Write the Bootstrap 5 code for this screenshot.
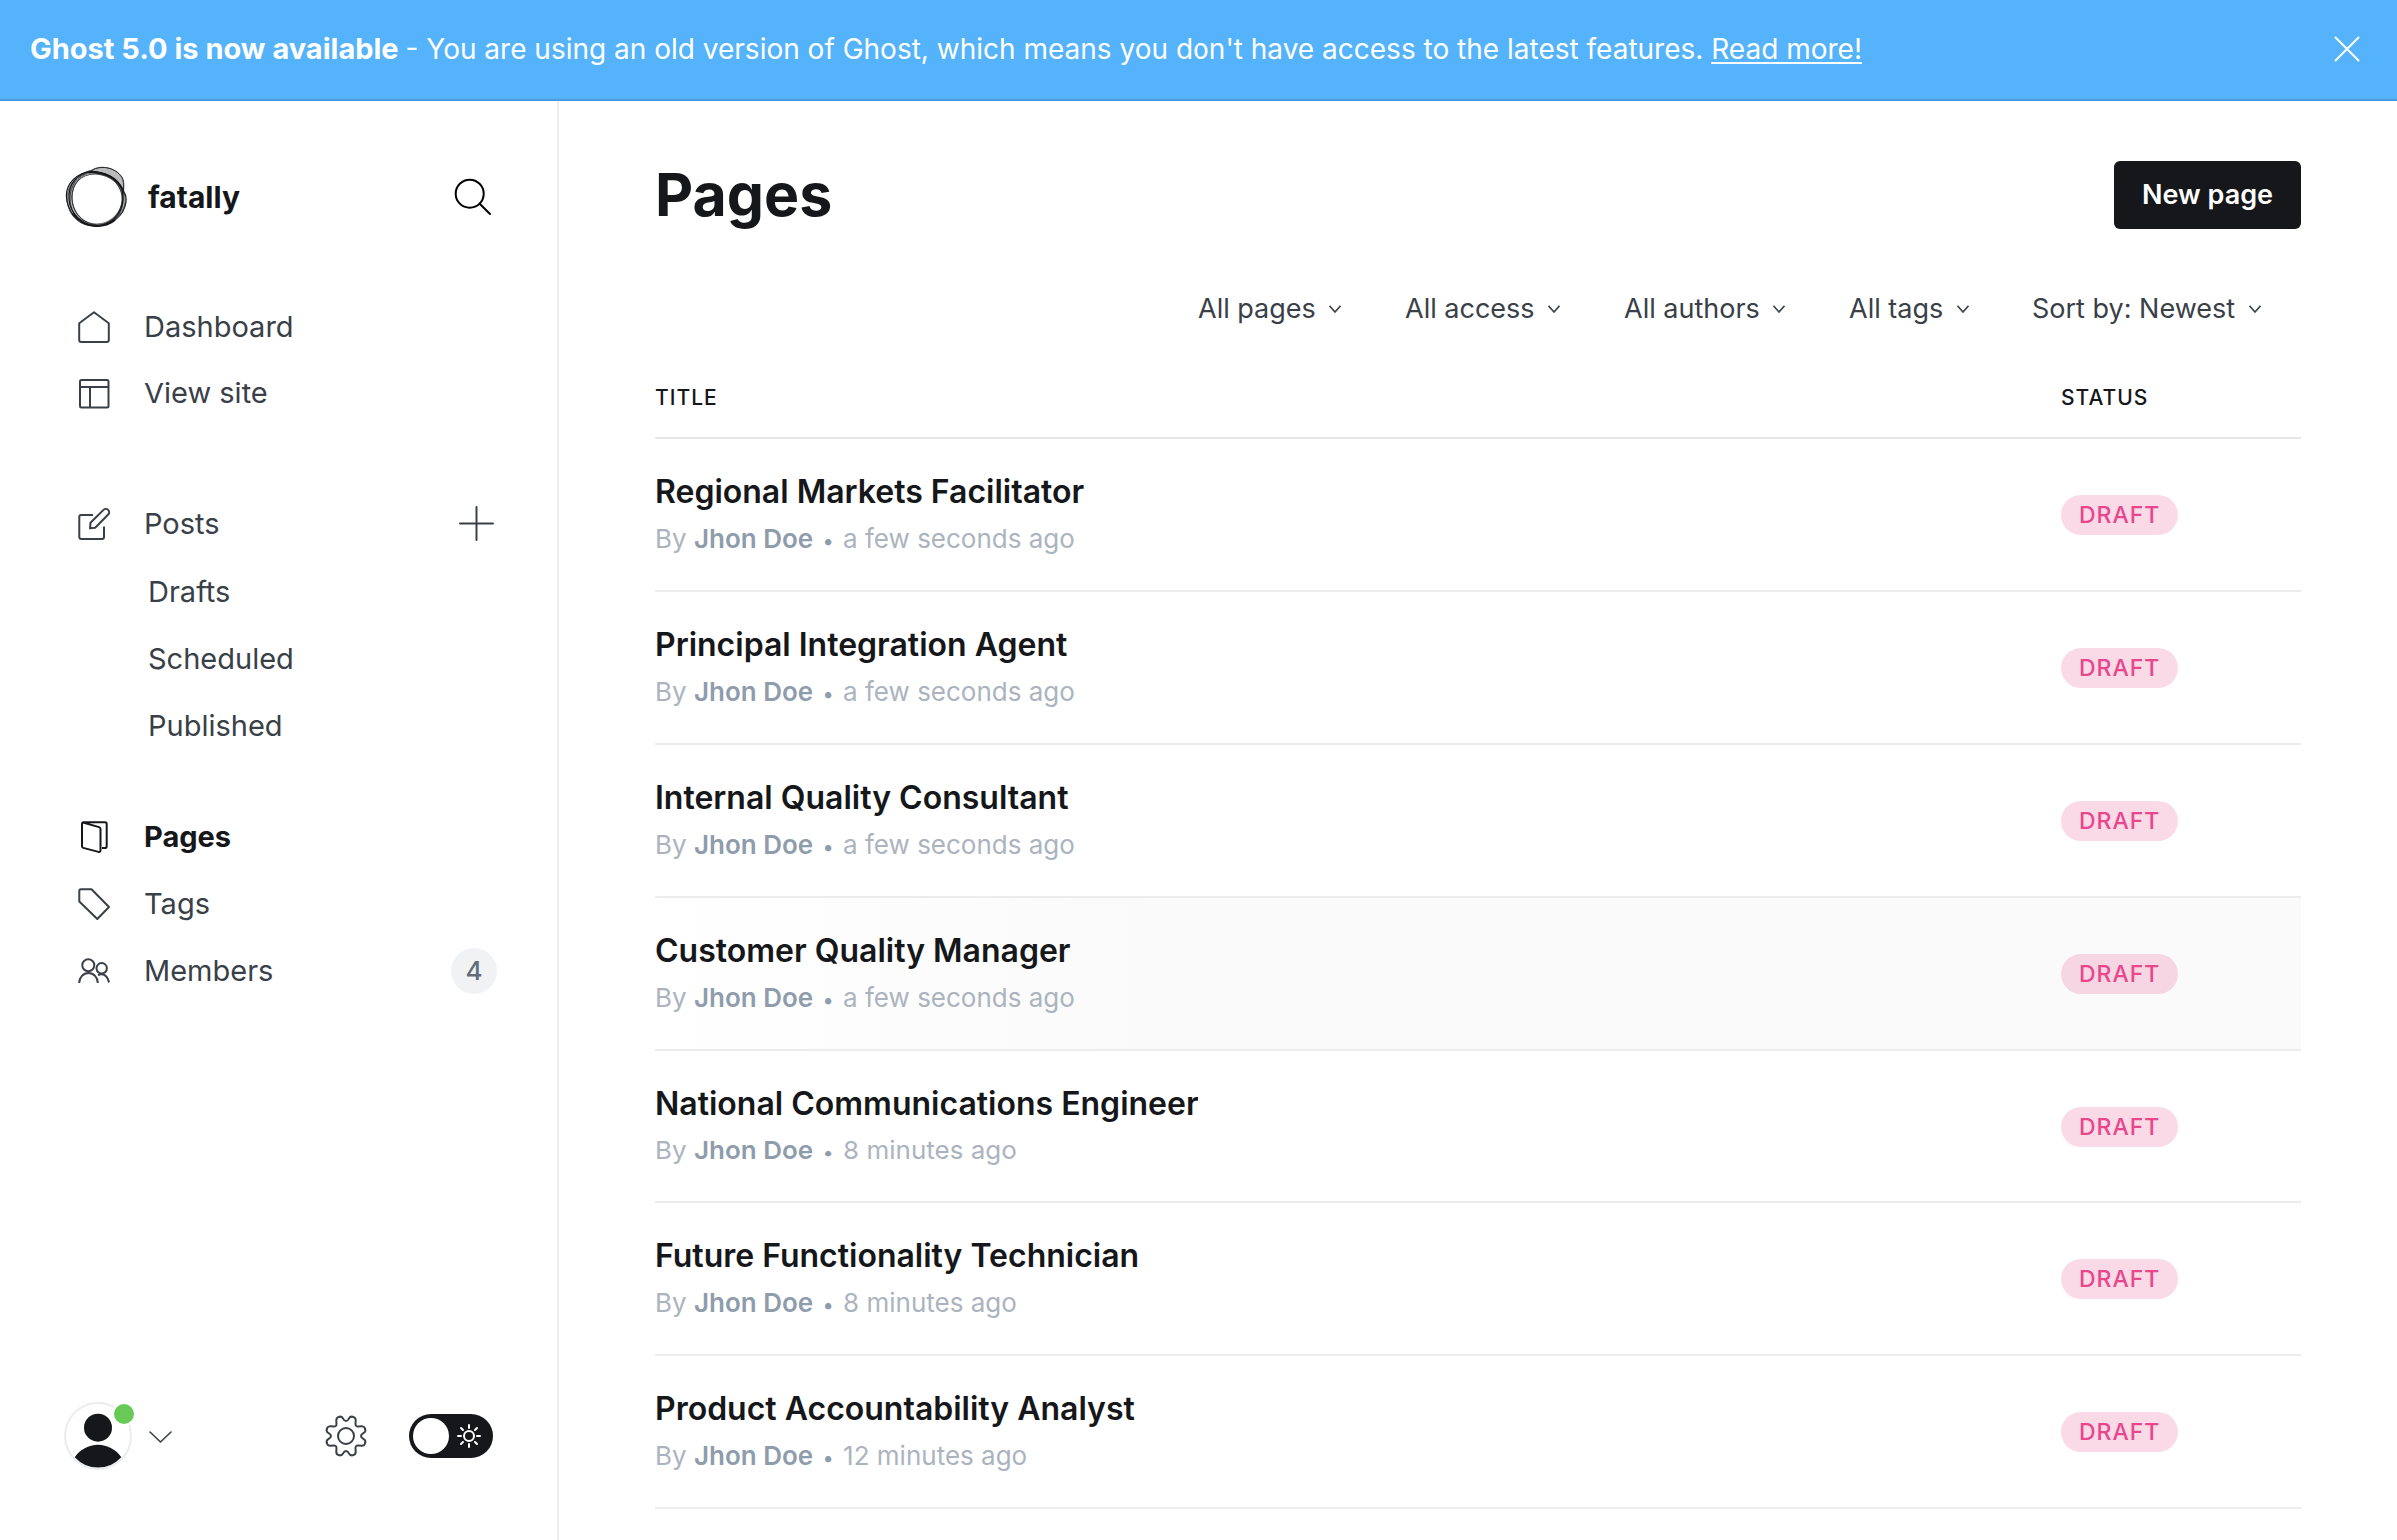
<!DOCTYPE html>
<html lang="en">
<head>
<meta charset="utf-8">
<meta name="viewport" content="width=device-width, initial-scale=1">
<title>Pages - fatally</title>
<link href="https://cdn.jsdelivr.net/npm/bootstrap@5.3.0/dist/css/bootstrap.min.css" rel="stylesheet">
<style>
  :root { --ink: #15171a; --slate: #394047; --muted: #abb4be; --author: #8e9cac; --line: #ebeced; }
  body { font-family: Inter, "Open Sans", sans-serif; font-size: 29px; line-height: 40px; color: var(--slate); }
  a { color: inherit; text-decoration: none; }
  svg { display: block; flex: none; fill: none; stroke: currentColor; stroke-width: 2; overflow: visible; }
  svg.solid { stroke: none; }
  svg.site-logo { stroke: var(--ink); }
  .icon-btn { background: none; border: 0; padding: 0; color: inherit; }

  .upgrade-bar { background: #54b3fa; border-bottom: 2px solid #459ce0; color: #fff; font-size: 28px; padding: 29px 38px 30px 30px; }
  .upgrade-bar strong { font-size: 29px; }
  .upgrade-bar a { text-decoration: underline; text-decoration-thickness: 2px; text-underline-offset: 3px; }

  .side-col { width: 560px; flex: none; border-right: 2px solid var(--line); padding: 64px 62px 70px 64px; min-height: calc(100vh - 101px); }
  .site-head { height: 64px; padding: 0 4px 0 1px; margin-bottom: 64px; gap: 21px; }
  .site-title { font-size: 30px; font-weight: 700; color: var(--ink); }
  .nav-item-row { height: 67px; padding: 0 0 0 14px; }
  .nav-item-row a { gap: 34px; }
  .nav-item-row.current { color: var(--ink); font-weight: 700; }
  .group-gap { margin-top: 64px; }
  .group-gap-sm { margin-top: 44px; }
  .sub-list { margin-top: 1px; padding-left: 84px; }
  .sub-list li { height: 67px; }
  .count-pill { width: 46px; height: 46px; margin-right: -2px; background: #f1f2f4; color: #626d79; font-size: 26px; font-weight: 500; }
  .plus-btn { margin-right: 1px; }
  .side-foot { padding-right: 2px; }
  .side-foot .cog-link { margin-right: 44px; }
  .avatar-dot { position: absolute; top: 0; right: -4px; width: 24px; height: 24px; border: 2px solid #fff; border-radius: 50%; background: #67ca56; }
  .night-switch { appearance: none; width: 84px; height: 44px; margin: 0; border-radius: 22px; background: var(--ink) url("data:image/svg+xml,%3Csvg xmlns='http://www.w3.org/2000/svg' viewBox='0 0 84 44'%3E%3Ccircle cx='22' cy='22' r='18' fill='%23fff'/%3E%3Cg transform='translate(60 22)' fill='none' stroke='%23fff' stroke-width='2' stroke-linecap='round'%3E%3Ccircle r='5'/%3E%3Cpath d='M0-11v3M0 8v3M-11 0h3M8 0h3M-8-8l2 2M6 6l2 2M-8 8l2-2M6-6l2-2'/%3E%3C/g%3E%3C/svg%3E") center / 100% 100% no-repeat; }

  .main-col { padding: 60px 96px 0; min-width: 0; }
  .screen-title { font-size: 59px; line-height: 68px; font-weight: 700; color: var(--ink); }
  .new-btn { background: var(--ink); color: #fff; font-size: 27px; line-height: 40px; font-weight: 600; padding: 14px 28px; border: 0; border-radius: 6px; }
  .filters { margin-top: 60px; padding-right: 40px; gap: 64px; }
  .filter-select { appearance: none; border: 0; color: var(--slate); font-size: 27px; line-height: 40px; height: 40px; padding: 0 25px 0 0;
    background: transparent url("data:image/svg+xml,%3Csvg xmlns='http://www.w3.org/2000/svg' viewBox='0 0 12 8'%3E%3Cpath d='M.5 .8 6 7 11.5 .8' fill='none' stroke='%23394047' stroke-width='1.6'/%3E%3C/svg%3E") right center / 12px 8px no-repeat; }
  .page-list { width: 100%; border-collapse: collapse; }
  .page-list th { padding: 58px 0 27px; font-size: 21px; line-height: 24px; font-weight: 500; letter-spacing: 1px; color: var(--ink); border-bottom: 2px solid #e5e7e9; text-transform: uppercase; }
  .page-list td { padding: 30px 0 28px; border-bottom: 2px solid var(--line); vertical-align: middle; }
  .page-list .status-cell { width: 240px; }
  .page-list tr.hovered { background: linear-gradient(to right, #fff, #fafafa 30%); }
  .entry-title { display: block; font-size: 32px; line-height: 46px; font-weight: 600; color: var(--ink); }
  .entry-meta { font-size: 26px; line-height: 46px; color: var(--muted); margin: 1px 0 0; }
  .entry-meta span { color: var(--author); font-weight: 600; }
  .entry-meta i { font-style: normal; font-size: 20px; line-height: 1; margin: 0 2px; color: var(--author); }
  .draft-pill { display: block; width: max-content; height: 40px; line-height: 40px; margin-bottom: 2px; padding: 0 18px; border-radius: 20px; font-size: 23px; font-weight: 500; letter-spacing: 1px; color: #e9468c; background: rgba(233, 69, 140, .2); }
</style>
</head>
<body>
<div class="upgrade-bar d-flex align-items-center justify-content-between">
  <div><strong>Ghost 5.0 is now available</strong> - You are using an old version of Ghost, which means you don't have access to the latest features. <a href="#">Read more!</a></div>
  <button class="icon-btn" type="button" aria-label="Close"><svg width="24" height="24" viewBox="0 0 24 24" stroke-linecap="round"><path d="M.5.5l23 23M23.5.5l-23 23"/></svg></button>
</div>

<div class="d-flex">
  <aside class="side-col d-flex flex-column">
    <div class="site-head d-flex align-items-center">
      <svg class="site-logo" width="62" height="62" viewBox="0 0 62 62">
        <path fill="#777" fill-opacity=".5" fill-rule="evenodd" stroke-width=".6" d="M27 4C34-1 49 1 55 9c5 6 3 12 4 18 3 8 0 18-6 23-5 6-12 10-22 10C17 61 6 52 3 40-1 28 5 10 27 4zM27 7C14 8 7 20 7 31c0 15 11 27 25 27 12 0 21-9 24-18 3-8 1-14-2-19-5-10-14-13-27-14z"/>
        <g stroke-width="1.200">
          <path d="M22 6C7 10-1 22 2 35c3 15 14 25 29 25 15-1 26-11 27-27C59 16 46 5 22 6z"/>
          <path d="M26 5C12 8 3 18 4 33c1 14 12 26 27 27 14 0 28-9 30-24 1-8-2-9-4-13C53 13 41 6 26 5z"/>
          <path stroke-width=".8" d="M25 6C34-2 50 1 57 11c4 7 0 16 1 21 1 14-9 27-26 28C17 60 5 48 5 33 5 20 12 9 25 6z"/>
          <path stroke-width=".8" d="M30 8C16 8 7 18 7 31c0 16 11 27 25 28 12 0 24-10 25-24C58 20 47 9 30 8z"/>
        </g>
        <path stroke-width="2" d="M8 47c6 8 14 13 24 13 8 0 13-2 18-6M24 6c14 0 27 5 34 18"/>
      </svg>
      <span class="site-title me-auto">fatally</span>
      <button class="icon-btn text-black" type="button" aria-label="Search"><svg width="36" height="36" viewBox="0 0 36 36" stroke-linecap="round"><circle cx="14.7" cy="14.7" r="14"/><path d="M24.7 24.7l10.3 10.3"/></svg></button>
    </div>

    <nav aria-label="Main">
      <ul class="list-unstyled m-0">
        <li class="nav-item-row d-flex"><a class="d-flex align-items-center" href="#"><svg width="32" height="32" viewBox="0 0 32 32" stroke-linejoin="round"><path d="M1.2 12.2V29q0 2 2 2h25.600q2 0 2-2V12.200L16 1.300z"/></svg>Dashboard</a></li>
        <li class="nav-item-row d-flex"><a class="d-flex align-items-center" href="#"><svg width="32" height="32" viewBox="0 0 32 32"><rect x="2" y="2" width="28.500" height="28.500" rx="1.500"/><path d="M2 10h28.500M12 10v20.500"/></svg>View site</a></li>
        <li class="nav-item-row d-flex justify-content-between group-gap"><a class="d-flex align-items-center" href="#"><svg width="32" height="32" viewBox="0 0 32 32" stroke-linejoin="round"><path d="M15 7H3Q1.300 7 1.300 9v20q0 2 2 2H24q2 0 2-2V18.500M12 20.300l.5-5.500L25.500 1.900a3.200 3.200 0 0 1 4.700 4.600L17.200 19.700z"/></svg>Posts</a>
          <button class="icon-btn plus-btn" type="button" aria-label="New post"><svg width="35" height="35" viewBox="0 0 35 35" stroke-linecap="round"><path d="M17.500 1v33M1 17.500h33"/></svg></button></li>
      </ul>
      <ul class="list-unstyled sub-list mb-0">
        <li class="d-flex align-items-center"><a href="#">Drafts</a></li>
        <li class="d-flex align-items-center"><a href="#">Scheduled</a></li>
        <li class="d-flex align-items-center"><a href="#">Published</a></li>
      </ul>
      <ul class="list-unstyled mb-0 group-gap-sm">
        <li class="nav-item-row d-flex current"><a class="d-flex align-items-center" href="#" aria-current="page"><svg width="32" height="32" viewBox="0 0 32 32" stroke-linejoin="round"><path d="M24 27h3q1.700 0 1.700-1.800V3Q28.700 1.200 27 1.200H5.500Q4 1.200 4 3v22.300q0 1.200 1.200 1.600l15.300 4q2 .4 2-1.600V8q0-1.500-1.400-1.900L5 1.500"/></svg>Pages</a></li>
        <li class="nav-item-row d-flex"><a class="d-flex align-items-center" href="#"><svg width="32" height="32" viewBox="0 0 32 32" stroke-linejoin="round"><path d="M3 1.300h10.500L31 19 19.300 31 1.300 13.500V3q0-1.700 1.700-1.700z"/></svg>Tags</a></li>
        <li class="nav-item-row d-flex align-items-center justify-content-between"><a class="d-flex align-items-center" href="#"><svg width="32" height="32" viewBox="0 0 32 32"><circle cx="10.300" cy="10.300" r="6"/><circle cx="23.700" cy="13.300" r="5.200"/><path d="M1.200 28a9.300 10 0 0 1 18.600 0M20 20q8.500-3 11 7.500"/></svg>Members</a>
          <span class="count-pill rounded-circle d-flex align-items-center justify-content-center">4</span></li>
      </ul>
    </nav>

    <div class="side-foot d-flex align-items-center mt-auto">
      <button class="icon-btn d-flex align-items-center" type="button" aria-label="Account menu">
        <span class="position-relative d-block">
          <svg class="solid" width="68" height="68" viewBox="0 0 68 68"><circle cx="34" cy="34" r="33" stroke="#ebeced" stroke-width="2"/><circle cx="34" cy="25.700" r="14" fill="#15171a"/><path fill="#15171a" d="M10.700 55.300a28 28 0 0 1 46.600 0a31.600 31.600 0 0 1-46.600 0z"/></svg>
          <span class="avatar-dot"></span>
        </span>
        <svg class="ms-3" width="24" height="13" viewBox="0 0 24 13" stroke-linecap="round"><path d="M2 2l10.500 10L23 2" stroke-width="1.600"/></svg>
      </button>
      <a class="cog-link ms-auto" href="#" aria-label="Settings"><svg width="40" height="40" viewBox="-20 -20 40 40"><defs><path id="cog" d="M0-15C1.800-15 2.300-16.200 3-17.600 4-19.400 6.200-19.600 7.800-18.900 9.400-18.200 9.800-17 9.700-15.500L9.500-12.300C9.400-10.300 10.300-9.400 12.300-9.500L15.500-9.700C17-9.800 18.200-9.400 18.900-7.800 19.600-6.200 19.400-4 17.600-3 16.200-2.300 15-1.800 15 0"/></defs><use href="#cog"/><use href="#cog" transform="rotate(90)"/><use href="#cog" transform="rotate(180)"/><use href="#cog" transform="rotate(270)"/><circle r="8"/></svg></a>
      <input class="night-switch" type="checkbox" role="switch" aria-label="Night mode">
    </div>
  </aside>

  <main class="main-col flex-grow-1">
    <div class="d-flex align-items-center justify-content-between">
      <h1 class="screen-title m-0">Pages</h1>
      <button class="new-btn" type="button">New page</button>
    </div>
    <div class="filters d-flex justify-content-end">
      <select class="filter-select" aria-label="Type"><option>All pages</option></select>
      <select class="filter-select" aria-label="Access"><option>All access</option></select>
      <select class="filter-select" aria-label="Author"><option>All authors</option></select>
      <select class="filter-select" aria-label="Tag"><option>All tags</option></select>
      <select class="filter-select" aria-label="Sort"><option>Sort by: Newest</option></select>
    </div>
    <table class="page-list">
      <thead><tr><th scope="col">Title</th><th scope="col" class="status-cell">Status</th></tr></thead>
      <tbody>
        <tr><td><a class="entry-title" href="#">Regional Markets Facilitator</a><p class="entry-meta">By <span>Jhon Doe</span> <i>•</i> a few seconds ago</p></td><td><span class="draft-pill">DRAFT</span></td></tr>
        <tr><td><a class="entry-title" href="#">Principal Integration Agent</a><p class="entry-meta">By <span>Jhon Doe</span> <i>•</i> a few seconds ago</p></td><td><span class="draft-pill">DRAFT</span></td></tr>
        <tr><td><a class="entry-title" href="#">Internal Quality Consultant</a><p class="entry-meta">By <span>Jhon Doe</span> <i>•</i> a few seconds ago</p></td><td><span class="draft-pill">DRAFT</span></td></tr>
        <tr class="hovered"><td><a class="entry-title" href="#">Customer Quality Manager</a><p class="entry-meta">By <span>Jhon Doe</span> <i>•</i> a few seconds ago</p></td><td><span class="draft-pill">DRAFT</span></td></tr>
        <tr><td><a class="entry-title" href="#">National Communications Engineer</a><p class="entry-meta">By <span>Jhon Doe</span> <i>•</i> 8 minutes ago</p></td><td><span class="draft-pill">DRAFT</span></td></tr>
        <tr><td><a class="entry-title" href="#">Future Functionality Technician</a><p class="entry-meta">By <span>Jhon Doe</span> <i>•</i> 8 minutes ago</p></td><td><span class="draft-pill">DRAFT</span></td></tr>
        <tr><td><a class="entry-title" href="#">Product Accountability Analyst</a><p class="entry-meta">By <span>Jhon Doe</span> <i>•</i> 12 minutes ago</p></td><td><span class="draft-pill">DRAFT</span></td></tr>
      </tbody>
    </table>
  </main>
</div>
<script src="https://cdn.jsdelivr.net/npm/bootstrap@5.3.0/dist/js/bootstrap.bundle.min.js"></script>
</body>
</html>
